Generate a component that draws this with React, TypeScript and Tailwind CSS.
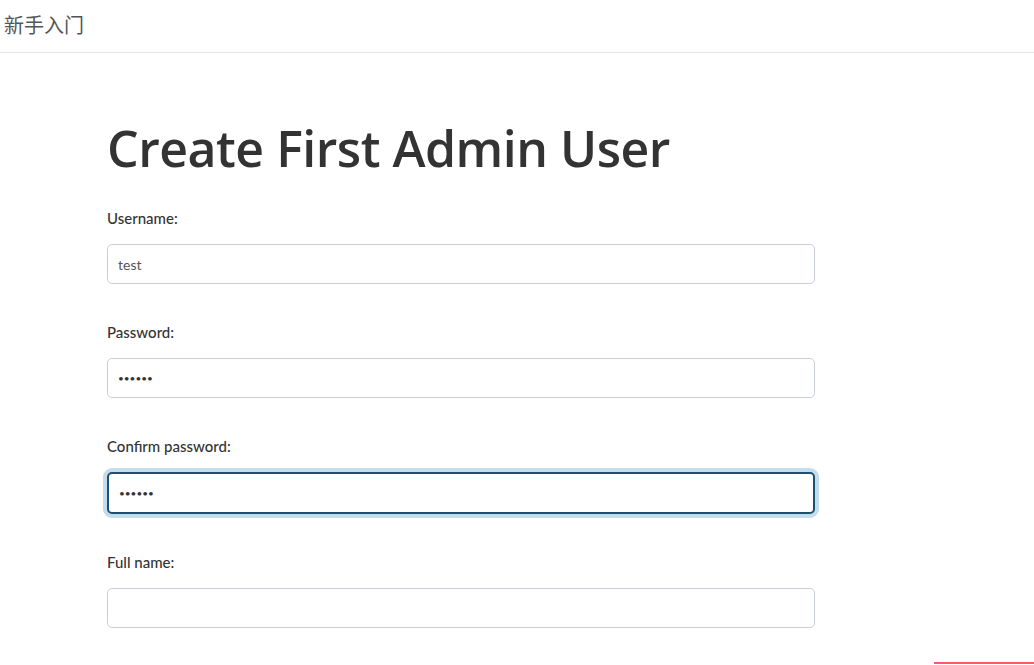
import React from 'react';

export default function App() {
  return (
    <div className="min-h-[665px] bg-white relative overflow-hidden" style={{ fontFamily: 'Lato, "Noto Sans CJK SC", sans-serif' }}>
      {/* Header */}
      <div className="h-[53px] border-b border-[#e5e5e5] flex items-center px-[4px]">
        <span className="text-[20px] text-[#555] pb-[3px]" style={{ fontFamily: '"Noto Sans CJK SC", sans-serif' }}>新手入门</span>
      </div>

      {/* Form */}
      <div className="pl-[107px] w-[815px] pt-[66px]">
        <h1 className="text-[50px] leading-[58px] text-[#333] font-semibold tracking-[-0.5px]" style={{ fontFamily: '"Open Sans", sans-serif' }}>
          Create First Admin User
        </h1>

        <div className="mt-[31px] flex flex-col gap-[38px]">
          <Field label="Username:" value="test" />
          <Field label="Password:" value="••••••" password />
          <Field label="Confirm password:" value="••••••" password focused />
          <Field label="Full name:" value="" />
        </div>
      </div>

      <div className="absolute right-0 bottom-[1px] w-[100px] h-[2px] bg-[#ff5a5f]" />
    </div>
  );
}

function Field({ label, value, password, focused }: { label: string; value: string; password?: boolean; focused?: boolean }) {
  return (
    <div>
      <div className="text-[15px] leading-[20px] text-[#333] font-medium">{label}</div>
      <div
        className={
          'mt-[16px] rounded-[5px] border bg-white flex items-center px-[10px] text-[14px] text-[#555] ' +
          (focused ? 'h-[42px] border-[#1d4f6e] border-2 px-[9px] shadow-[0_0_0_4px_#c5dcea]' : 'h-[40px] border-[#c8ced4]')
        }
      >
        <span className={password ? 'text-[10px] tracking-[0px] text-[#333]' : ''}>{value}</span>
      </div>
    </div>
  );
}
